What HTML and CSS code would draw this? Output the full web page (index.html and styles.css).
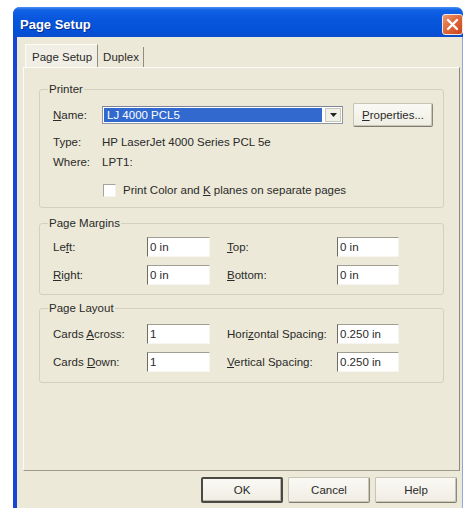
FILE: index.html
```html
<!DOCTYPE html>
<html>
<head>
<meta charset="utf-8">
<title>Page Setup</title>
<link rel="stylesheet" href="styles.css">
</head>
<body>
<div class="window">
  <div class="titlebar">
    <span class="title">Page Setup</span>
    <button class="close" aria-label="Close">
      <svg width="13" height="13" viewBox="0 0 13 13"><path d="M2 2 L11 11 M11 2 L2 11" stroke="#fff" stroke-width="2.4" stroke-linecap="round"/></svg>
    </button>
  </div>
  <div class="client">
    <div class="tabs">
      <div class="tab active">Page Setup</div>
      <div class="tab">Duplex</div>
    </div>
    <div class="panel">
      <fieldset class="group printer">
        <legend>Printer</legend>
        <div class="rows">
          <div class="row name-row">
            <span class="label"><u>N</u>ame:</span>
            <div class="combo">
              <span class="combo-value">LJ 4000 PCL5</span>
              <span class="combo-arrow"><svg width="7" height="4" viewBox="0 0 7 4"><path d="M0 0 H7 L3.5 4 Z" fill="#222"/></svg></span>
            </div>
            <button class="btn props"><u>P</u>roperties...</button>
          </div>
          <div class="row info-row type-row">
            <span class="label">Type:</span>
            <span class="value">HP LaserJet 4000 Series PCL 5e</span>
          </div>
          <div class="row info-row where-row">
            <span class="label">Where:</span>
            <span class="value">LPT1:</span>
          </div>
          <label class="row check-row">
            <span class="checkbox"></span>
            <span>Print Color and <u>K</u> planes on separate pages</span>
          </label>
        </div>
      </fieldset>

      <fieldset class="group margins">
        <legend>Page Margins</legend>
        <div class="grid">
          <span class="label">Le<u>f</u>t:</span>
          <span class="field">0 in</span>
          <span class="label right-label"><u>T</u>op:</span>
          <span class="field">0 in</span>
          <span class="label"><u>R</u>ight:</span>
          <span class="field">0 in</span>
          <span class="label right-label"><u>B</u>ottom:</span>
          <span class="field">0 in</span>
        </div>
      </fieldset>

      <fieldset class="group layout">
        <legend>Page Layout</legend>
        <div class="grid">
          <span class="label">Cards <u>A</u>cross:</span>
          <span class="field">1</span>
          <span class="label right-label">Hori<u>z</u>ontal Spacing:</span>
          <span class="field">0.250 in</span>
          <span class="label">Cards <u>D</u>own:</span>
          <span class="field">1</span>
          <span class="label right-label"><u>V</u>ertical Spacing:</span>
          <span class="field">0.250 in</span>
        </div>
      </fieldset>
    </div>
    <div class="buttons">
      <button class="btn dlg default">OK</button>
      <button class="btn dlg">Cancel</button>
      <button class="btn dlg">Help</button>
    </div>
  </div>
</div>
</body>
</html>
```

FILE: styles.css
```css
html, body {
  margin: 0;
  padding: 0;
  background: #ffffff;
  overflow: hidden;
}

body {
  font-family: "Liberation Sans", Arial, sans-serif;
  font-size: 11.5px;
  color: #2a2a2a;
}

.window {
  margin: 7px 0 0 13px;
  width: 445px;
  height: 501px;
  border-left: 4px solid #1745d6;
  border-right: 1px solid #8fa8e0;
  border-radius: 7px 7px 0 0;
  background: #ece9d8;
  display: flex;
  flex-direction: column;
}

/* blue caption strip */
.titlebar {
  height: 30px;
  margin-left: -4px;
  margin-right: -1px;
  border-radius: 7px 7px 0 0;
  background: linear-gradient(#4a90f2 0, #1262e6 3px, #0756dc 40%, #0452d8 80%, #0a4ccb 100%);
  display: flex;
  align-items: center;
  justify-content: space-between;
  padding: 0 0 0 7px;
}

.title {
  font-family: "Liberation Sans", Arial, sans-serif;
  font-weight: bold;
  font-size: 13px;
  color: #ffffff;
  text-shadow: 1px 1px 0 #0a2c8c;
  margin-top: 5px;
}

.close {
  width: 21px;
  height: 21px;
  padding: 0;
  border: 1px solid #f4e7e0;
  border-radius: 3px;
  background: linear-gradient(135deg, #eb9a72 0, #e16a3d 45%, #c9461c 100%);
  display: flex;
  align-items: center;
  justify-content: center;
  margin-top: 4px;
}

.client {
  flex: 1;
  padding: 7px 2px 0 6px;
  display: flex;
  flex-direction: column;
}

/* tab strip */
.tabs {
  display: flex;
  height: 23px;
  padding-left: 2px;
  align-items: flex-end;
}

.tab {
  height: 20px;
  line-height: 20px;
  padding: 0 4px 0 5px;
  border-right: 1px solid #8e8d80;
  color: #2a2a2a;
}

.tab.active {
  height: 23px;
  line-height: 24px;
  padding: 0 5px 0 6px;
  background: #f1efe5;
  border-top: 1px solid #fbfbf8;
  border-left: 1px solid #fbfbf8;
  box-sizing: border-box;
}

.panel {
  height: 404px;
  box-sizing: border-box;
  border: 1px solid #fbfbf7;
  border-right-color: #8b8a7e;
  border-bottom-color: #9c9a8c;
  padding: 15px 15px 0 15px;
  display: flex;
  flex-direction: column;
}

/* group boxes */
.group {
  margin: 0;
  padding: 0;
  border: 1px solid #d3d0c0;
  border-radius: 3px;
  min-width: 0;
}

.group legend {
  margin-left: 8px;
  padding: 0 1px 0 1px;
  line-height: 13px;
  color: #2a2a2a;
}

.label {
  white-space: nowrap;
}

.rows {
  padding: 7px 9px 9px 13px;
  display: flex;
  flex-direction: column;
}

.row {
  display: flex;
  align-items: center;
}

.row .label {
  width: 49px;
  flex: none;
}

.name-row {
  height: 24px;
}

.combo {
  width: 241px;
  height: 18px;
  box-sizing: border-box;
  border: 1px solid #8d96a4;
  border-top-color: #7c8495;
  background: #ffffff;
  display: flex;
  align-items: stretch;
  padding: 1px;
}

.combo-value {
  flex: 1;
  background: #3169cf;
  color: #ffffff;
  padding-left: 3px;
  line-height: 14px;
}

.combo-arrow {
  width: 16px;
  margin-left: 3px;
  background: #f0efe8;
  border: 1px solid #c9c7ba;
  box-sizing: border-box;
  display: flex;
  align-items: center;
  justify-content: center;
}

.btn {
  font-family: "Liberation Sans", Arial, sans-serif;
  font-size: 11.5px;
  color: #2a2a2a;
  background: linear-gradient(#faf9f4, #efede3);
  border: 1px solid #c7c5b6;
  border-right-color: #8b897c;
  border-bottom-color: #7e7c70;
  border-radius: 2px;
  box-shadow: inset -1px -1px 0 #c9c6b5;
  padding: 0;
}

.props {
  width: 80px;
  height: 24px;
  margin-left: 10px;
}

.info-row {
  height: 16px;
}

.type-row {
  margin-top: 7px;
}

.where-row {
  margin-top: 4px;
}

.check-row {
  height: 16px;
  margin-top: 12px;
  padding-left: 50px;
  gap: 7px;
}

.checkbox {
  width: 13px;
  height: 13px;
  box-sizing: border-box;
  background: #ffffff;
  border: 1px solid #a6a498;
  border-right-color: #f4f3ee;
  border-bottom-color: #f4f3ee;
}

.margins {
  margin-top: 9px;
}

.layout {
  margin-top: 7px;
}

.grid {
  display: grid;
  grid-template-columns: 94px 63px 127px 62px;
  grid-auto-rows: 20px;
  row-gap: 8px;
  align-items: center;
  padding: 7px 0 9px 13px;
}

.layout .grid {
  padding-top: 9px;
  padding-bottom: 10px;
}

.grid .right-label {
  padding-left: 17px;
}

.field {
  height: 20px;
  box-sizing: border-box;
  background: #ffffff;
  border-left: 1px solid #6e6d64;
  border-top: 1px solid #a09e92;
  border-right: 1px solid #f6f5ef;
  border-bottom: 1px solid #f6f5ef;
  padding: 2px 0 0 2px;
  line-height: 14px;
  color: #2a2a2a;
}

.buttons {
  display: flex;
  justify-content: flex-end;
  gap: 5px;
  margin-top: 6px;
  margin-right: 3px;
}

.dlg {
  width: 82px;
  height: 26px;
}

.dlg.default {
  border: 2px solid #4a4a44;
  box-shadow: inset -1px -1px 0 #b9b6a6;
}
```
